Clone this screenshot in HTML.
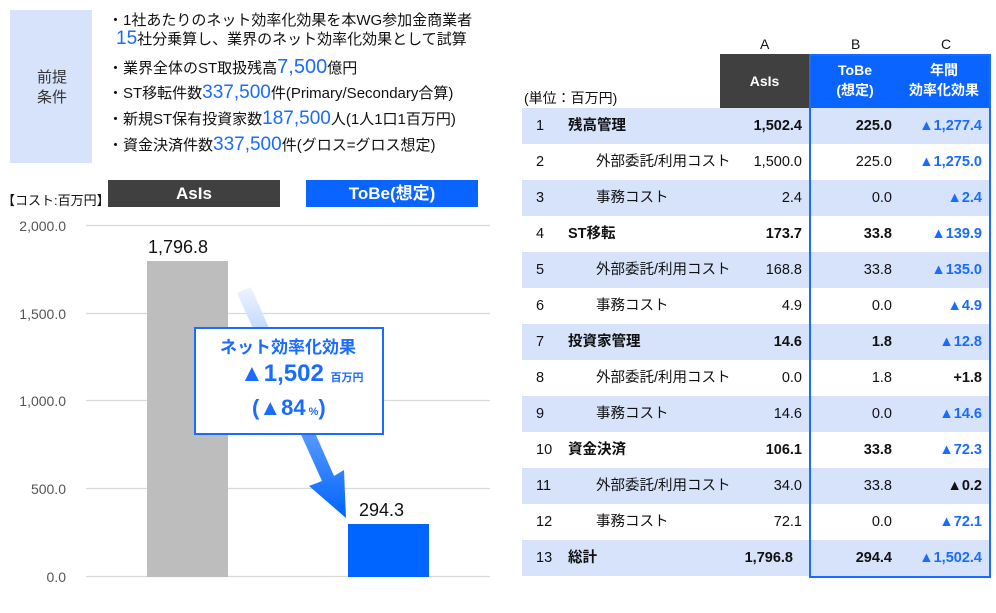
<!DOCTYPE html>
<html><head><meta charset="utf-8"><style>
*{margin:0;padding:0;box-sizing:border-box}
body{width:996px;height:613px;background:#fff;position:relative;overflow:hidden;font-family:"Liberation Sans","Noto Sans CJK JP",sans-serif;color:#111}
.a{position:absolute;white-space:nowrap}
.bl{color:#1a6bff}
.pl{font-size:15px;line-height:18px}
.row{position:absolute;left:522px;width:468px;height:36px;font-size:14.5px}
.row.s{background:#d6e3fb}
.row span{position:absolute;top:10px;white-space:nowrap;line-height:17px;height:17px}
.n{left:14px}
.lb{left:46px;font-weight:bold}
.li{left:74px}
.ca{right:188px}
.cb{right:98px}
.cc{right:8px;color:#1a6bff;font-weight:bold}
.b{font-weight:bold}
</style></head><body>
<div class="a" style="left:10px;top:10px;width:82px;height:153px;background:#d6e3fb"></div>
<div class="a" style="left:37px;top:68px;font-size:15px;line-height:20px;color:#333">前提<br>条件</div>
<div class="a pl" style="left:108px;top:12px">・1社あたりのネット効率化効果を本WG参加金商業者</div>
<div class="a pl" style="left:116px;top:30px"><span class="bl" style="font-size:19px">15</span>社分乗算し、業界のネット効率化効果として試算</div>
<div class="a pl" style="left:108px;top:58px">・業界全体のST取扱残高<span class="bl" style="font-size:20px">7,500</span>億円</div>
<div class="a pl" style="left:108px;top:84px">・ST移転件数<span class="bl" style="font-size:19px">337,500</span>件(Primary/Secondary合算)</div>
<div class="a pl" style="left:108px;top:110px">・新規ST保有投資家数<span class="bl" style="font-size:19px">187,500</span>人(1人1口1百万円)</div>
<div class="a pl" style="left:108px;top:136px">・資金決済件数<span class="bl" style="font-size:19px">337,500</span>件(グロス=グロス想定)</div>

<div class="a" style="left:2px;top:190px;font-size:13px">【コスト:百万円】</div>
<div class="a" style="left:108px;top:180px;width:172px;height:27px;background:#404040;color:#fff;font-weight:bold;font-size:17px;text-align:center;line-height:27px">AsIs</div>
<div class="a" style="left:306px;top:180px;width:172px;height:27px;background:#0a64ff;color:#fff;font-weight:bold;font-size:17px;text-align:center;line-height:27px">ToBe(想定)</div>

<svg class="a" style="left:0;top:210px" width="500" height="400">
<g stroke="#d9d9d9" stroke-width="1.3">
<line x1="86" x2="490" y1="15.5" y2="15.5"/><line x1="86" x2="490" y1="103.5" y2="103.5"/><line x1="86" x2="490" y1="190.5" y2="190.5"/><line x1="86" x2="490" y1="278.5" y2="278.5"/><line x1="86" x2="490" y1="366.5" y2="366.5"/></g>
<g font-size="14" fill="#555" text-anchor="end" font-family="Liberation Sans, sans-serif">
<text x="66" y="21">2,000.0</text><text x="66" y="109">1,500.0</text><text x="66" y="196">1,000.0</text><text x="66" y="284">500.0</text><text x="66" y="372">0.0</text></g>
<rect x="147" y="51" width="81" height="316" fill="#bdbdbd"/>
<rect x="348" y="314" width="81" height="53" fill="#0064ff"/>
<text x="148" y="43" font-size="18" fill="#111" font-family="Liberation Sans, sans-serif">1,796.8</text>
<text x="359" y="306" font-size="18" fill="#111" font-family="Liberation Sans, sans-serif">294.3</text>
<defs><linearGradient id="g" x1="0" y1="0" x2="0" y2="1"><stop offset="0" stop-color="#eef4ff"/><stop offset="1" stop-color="#0064ff"/></linearGradient></defs>
<polygon points="237,83 251,77 334,266 344,260 346,308 309,276 322,271" fill="url(#g)"/>
</svg>

<div class="a" style="left:194px;top:327px;width:190px;height:108px;border:2px solid #1a6bff;background:#fff"></div>
<div class="a" style="left:220px;top:333px;font-size:17px;font-weight:bold;color:#1a6bff">ネット効率化効果</div>
<div class="a" style="left:240px;top:360px;font-size:24px;font-weight:bold;color:#1a6bff">▲1,502 <span style="font-size:11px">百万円</span></div>
<div class="a" style="left:252px;top:395px;font-size:22px;font-weight:bold;color:#1a6bff">(▲84<span style="font-size:11px"> %</span>)</div>

<div class="a" style="left:760px;top:36px;font-size:14px">A</div>
<div class="a" style="left:851px;top:36px;font-size:14px">B</div>
<div class="a" style="left:941px;top:36px;font-size:14px">C</div>
<div class="a" style="left:720px;top:54px;width:89px;height:54px;background:#404040;color:#fff;font-weight:bold;font-size:14px;text-align:center;line-height:54px">AsIs</div>
<div class="a" style="left:809px;top:54px;width:182px;height:54px;background:#0a64ff"></div>
<div class="a" style="left:822px;top:60px;width:66px;color:#fff;font-weight:bold;font-size:14px;text-align:center;line-height:20px">ToBe<br>(想定)</div>
<div class="a" style="left:900px;top:60px;width:88px;color:#fff;font-weight:bold;font-size:14px;text-align:center;line-height:20px">年間<br>効率化効果</div>
<div class="a" style="left:524px;top:90px;font-size:14px;line-height:17px">(単位：百万円)</div>

<div class="row s" style="top:108px"><span class="n">1</span><span class="lb">残高管理</span><span class="ca b">1,502.4</span><span class="cb b">225.0</span><span class="cc">▲1,277.4</span></div>
<div class="row" style="top:144px"><span class="n">2</span><span class="li">外部委託/利用コスト</span><span class="ca">1,500.0</span><span class="cb">225.0</span><span class="cc">▲1,275.0</span></div>
<div class="row s" style="top:180px"><span class="n">3</span><span class="li">事務コスト</span><span class="ca">2.4</span><span class="cb">0.0</span><span class="cc">▲2.4</span></div>
<div class="row" style="top:216px"><span class="n">4</span><span class="lb">ST移転</span><span class="ca b">173.7</span><span class="cb b">33.8</span><span class="cc">▲139.9</span></div>
<div class="row s" style="top:252px"><span class="n">5</span><span class="li">外部委託/利用コスト</span><span class="ca">168.8</span><span class="cb">33.8</span><span class="cc">▲135.0</span></div>
<div class="row" style="top:288px"><span class="n">6</span><span class="li">事務コスト</span><span class="ca">4.9</span><span class="cb">0.0</span><span class="cc">▲4.9</span></div>
<div class="row s" style="top:324px"><span class="n">7</span><span class="lb">投資家管理</span><span class="ca b">14.6</span><span class="cb b">1.8</span><span class="cc">▲12.8</span></div>
<div class="row" style="top:360px"><span class="n">8</span><span class="li">外部委託/利用コスト</span><span class="ca">0.0</span><span class="cb">1.8</span><span class="cc" style="color:#111">+1.8</span></div>
<div class="row s" style="top:396px"><span class="n">9</span><span class="li">事務コスト</span><span class="ca">14.6</span><span class="cb">0.0</span><span class="cc">▲14.6</span></div>
<div class="row" style="top:432px"><span class="n">10</span><span class="lb">資金決済</span><span class="ca b">106.1</span><span class="cb b">33.8</span><span class="cc">▲72.3</span></div>
<div class="row s" style="top:468px"><span class="n">11</span><span class="li">外部委託/利用コスト</span><span class="ca">34.0</span><span class="cb">33.8</span><span class="cc" style="color:#111">▲0.2</span></div>
<div class="row" style="top:504px"><span class="n">12</span><span class="li">事務コスト</span><span class="ca">72.1</span><span class="cb">0.0</span><span class="cc">▲72.1</span></div>
<div class="row s" style="top:540px"><span class="n">13</span><span class="lb">総計</span><span class="ca b" style="right:197px">1,796.8</span><span class="cb b">294.4</span><span class="cc">▲1,502.4</span></div>
<div class="a" style="left:809px;top:54px;width:182px;height:524px;border:2px solid #1a6bff"></div>
</body></html>
